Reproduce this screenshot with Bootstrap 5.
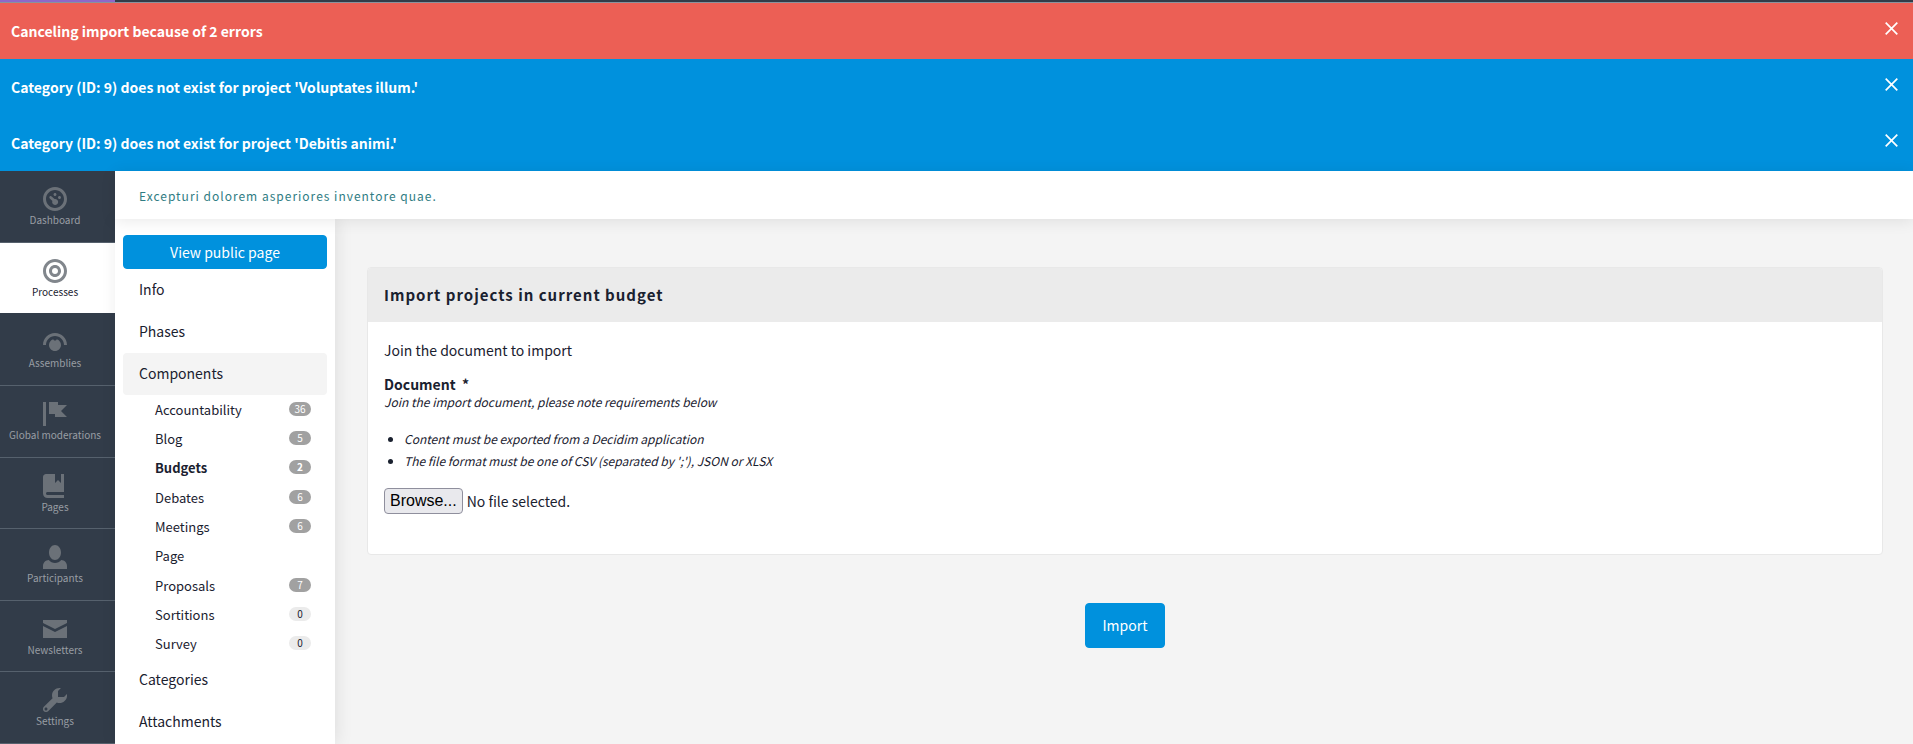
<!DOCTYPE html>
<html lang="en">
<head>
<meta charset="utf-8">
<meta name="viewport" content="width=device-width, initial-scale=1">
<title>Import projects</title>
<link href="https://cdn.jsdelivr.net/npm/bootstrap@5.3.0/dist/css/bootstrap.min.css" rel="stylesheet">
<style>
:root { --brand: #0091dd; --ink: #1a212f; --shell: #323c49; }
body { font-family: "Noto Sans CJK SC", sans-serif; font-size: 14px; line-height: 24px; color: var(--ink); background: #f4f4f4; }
a { text-decoration: none; }
.topstrip { height: 3px; background: #323c49; border-bottom: 1px solid #8a939d; }
.topstrip-logo { width: 115px; background: #8e68c9; }
.flash { height: 56px; padding: 0 10px 0 11px; color: #fff; font-size: 14px; font-weight: 700; }
.flash-error { background: #ec5f55; }
.flash-info { background: var(--brand); }
.flash-close { width: 23px; height: 22px; padding: 5px; margin-bottom: 7px; border: 0; background: none; color: #fff; }
.flash-close svg { display: block; width: 13px; height: 13px; }
.mainnav { width: 115px; background: var(--shell); }
.mainnav a { flex: 1 0 70px; padding: 16px 5px 0 0; border-bottom: 1px solid #56616d; color: #999ea4; font-size: 10px; line-height: 16px; text-align: center; }
.mainnav svg { width: 24px; height: 24px; fill: #6b7178; margin-bottom: 1px; }
.mainnav a.active { background: #fff; color: var(--ink); border-color: var(--shell); }
.mainnav a.active svg { fill: #81868c; }
.titlebar { height: 48px; padding: 2px 24px 0; background: #fff; box-shadow: 0 2px 16px rgba(0,0,0,.09); z-index: 1; }
.titlebar a { color: #2f7c83; font-size: 12px; letter-spacing: 1px; }
.subnav { width: 220px; padding: 16px 8px 0; background: #fff; box-shadow: 2px 0 16px rgba(0,0,0,.09); }
.btn-brand { --bs-btn-bg: #0091dd; --bs-btn-border-color: #0091dd; --bs-btn-color: #fff; --bs-btn-hover-bg: #0081c5; --bs-btn-hover-color: #fff; --bs-btn-border-radius: 4px; --bs-btn-font-size: 14px; }
.subnav .btn { height: 34px; padding: 4px; line-height: 24px; }
.section-link { display: block; padding: 8px 16px 10px; border-radius: 4px; color: var(--ink); }
.section-link.current { background: #f4f4f4; }
.sublist { height: 264px; }
.sublist a { padding: 0 16px 0 32px; font-size: 13px; line-height: 24px; color: var(--ink); }
.count { width: 22px; height: 14px; margin-bottom: 2px; border-radius: 7px; background: #a1a1a1; color: #fff; font-size: 10px; line-height: 14px; text-align: center; font-weight: 400; }
.count-empty { background: #ebebeb; color: var(--ink); }
.workspace { padding: 48px 30px 48px 32px; }
.panel { border: 1px solid #e8e8e8; border-radius: 4px; background: #fff; }
.panel-title { padding: 15px 16px; margin: 0; background: #ebebeb; font-size: 15px; line-height: 24px; font-weight: 700; letter-spacing: 1px; }
.panel-content { padding: 16px 16px 40px; }
.doc-label { margin-top: 12px; font-size: 14px; line-height: 20px; font-weight: 700; }
.help { font-size: 12px; line-height: 16px; font-style: italic; }
.help ul { padding-left: 20px; margin: 18px 0 16px; line-height: 22px; }
.file-button { height: 26px; padding: 0 5px; border: 1px solid #8f8f9d; border-radius: 4px; background: #e9e9ed; color: #000; font: 16px/24px "Liberation Sans", sans-serif; }
.submit { width: 80px; height: 45px; margin-top: 48px; }
</style>
</head>
<body class="d-flex flex-column min-vh-100">
<div class="topstrip d-flex"><div class="topstrip-logo"></div></div>

<div class="flash flash-error d-flex align-items-center justify-content-between" role="alert">
  <span>Canceling import because of 2 errors</span>
  <button class="flash-close" type="button" aria-label="Dismiss alert"><svg viewBox="0 0 13 13" stroke="currentColor" stroke-width="1.700"><path d="M.7.7l11.600 11.600M12.300.7L.7 12.300"/></svg></button>
</div>
<div class="flash flash-info d-flex align-items-center justify-content-between" role="alert">
  <span>Category (ID: 9) does not exist for project 'Voluptates illum.'</span>
  <button class="flash-close" type="button" aria-label="Dismiss alert"><svg viewBox="0 0 13 13" stroke="currentColor" stroke-width="1.700"><path d="M.7.7l11.600 11.600M12.300.7L.7 12.300"/></svg></button>
</div>
<div class="flash flash-info d-flex align-items-center justify-content-between" role="alert">
  <span>Category (ID: 9) does not exist for project 'Debitis animi.'</span>
  <button class="flash-close" type="button" aria-label="Dismiss alert"><svg viewBox="0 0 13 13" stroke="currentColor" stroke-width="1.700"><path d="M.7.7l11.600 11.600M12.300.7L.7 12.300"/></svg></button>
</div>

<div class="d-flex flex-grow-1">
  <nav class="mainnav d-flex flex-column flex-shrink-0" aria-label="Main">
    <a href="#" class="d-flex flex-column align-items-center"><svg viewBox="0 0 8 8"><path d="M4 0c-2.200 0-4 1.800-4 4s1.800 4 4 4 4-1.800 4-4-1.800-4-4-4zm0 1c1.660 0 3 1.340 3 3s-1.340 3-3 3-3-1.340-3-3 1.340-3 3-3zm0 1c-.28 0-.5.22-.5.5s.22.5.5.5.5-.22.5-.5-.22-.5-.5-.5zm-1.500 1c-.2 0-.4.2-.4.450 0 .15.050.25.150.350l.9.850c-.05.1-.1.22-.1.350 0 .55.450 1 1 1s1-.45 1-1-.450-1-1-1h-.2l-.95-.85a.5.5 0 0 0-.4-.15zm3 0c-.28 0-.5.22-.5.5s.22.5.5.5.5-.22.5-.5-.22-.5-.5-.5z"/></svg>Dashboard</a>
    <a href="#" class="active d-flex flex-column align-items-center" aria-current="page"><svg viewBox="0 0 8 8"><path d="M4 0c-2.200 0-4 1.800-4 4s1.800 4 4 4 4-1.800 4-4-1.800-4-4-4zm0 1c1.660 0 3 1.340 3 3s-1.340 3-3 3-3-1.340-3-3 1.340-3 3-3zm0 1c-1.110 0-2 .9-2 2s.9 2 2 2 2-.9 2-2-.9-2-2-2zm0 1c.56 0 1 .44 1 1s-.44 1-1 1-1-.44-1-1 .44-1 1-1z"/></svg>Processes</a>
    <a href="#" class="d-flex flex-column align-items-center"><svg viewBox="0 0 8 8"><path d="M4 1c-2.200 0-4 1.800-4 4h1c0-1.660 1.340-3 3-3s3 1.340 3 3h1c0-2.200-1.800-4-4-4zm-.59 2.090c-.81.25-1.410 1.010-1.410 1.910 0 1.110.9 2 2 2 1.110 0 2-.89 2-2 0-.9-.59-1.650-1.410-1.910-.1.250-.320.430-.59.430s-.5-.18-.59-.430z"/></svg>Assemblies</a>
    <a href="#" class="d-flex flex-column align-items-center"><svg viewBox="0 0 8 8"><path d="M0 0v8h1v-8h-1zm2 0v4h2v1h4l-2-1.970 2-2.030h-3v-1h-3z"/></svg>Global moderations</a>
    <a href="#" class="d-flex flex-column align-items-center"><svg viewBox="0 0 8 8"><path d="M1 0c-.55 0-1 .45-1 1v5.500c0 .83.67 1.500 1.500 1.500h5.500v-1h-5.500c-.28 0-.5-.22-.5-.5s.22-.5.5-.5h5.500v-6h-1v3l-1-1-1 1v-3h-3z"/></svg>Pages</a>
    <a href="#" class="d-flex flex-column align-items-center"><svg viewBox="0 0 8 8"><path d="M4 0c-1.100 0-2 1.120-2 2.500s.9 2.500 2 2.500 2-1.120 2-2.500-.9-2.500-2-2.500zm-2.090 5c-1.060.05-1.910.92-1.910 2v1h8v-1c0-1.080-.84-1.950-1.910-2-.54.61-1.280 1-2.090 1-.81 0-1.550-.39-2.090-1z"/></svg>Participants</a>
    <a href="#" class="d-flex flex-column align-items-center"><svg viewBox="0 0 8 8"><path d="M0 1v1l4 2 4-2v-1h-8zm0 2v4h8v-4l-4 2-4-2z"/></svg>Newsletters</a>
    <a href="#" class="d-flex flex-column align-items-center"><svg viewBox="0 0 8 8"><path d="M5.500 0c-1.380 0-2.500 1.120-2.500 2.500 0 .32.080.62.190.91l-2.910 2.880c-.39.39-.39 1.050 0 1.440.2.2.46.28.72.28.26 0 .52-.09.72-.28l2.880-2.910c.28.11.58.19.91.19 1.380 0 2.500-1.120 2.500-2.500 0-.16 0-.32-.03-.47l-.97.97h-2v-2l.97-.97c-.15-.03-.31-.03-.47-.03zm-4.500 6.500c.28 0 .5.22.5.5s-.22.5-.5.5-.5-.22-.5-.5.22-.5.5-.5z"/></svg>Settings</a>
  </nav>

  <div class="d-flex flex-column flex-grow-1">
    <header class="titlebar d-flex align-items-center"><a href="#">Excepturi dolorem asperiores inventore quae.</a></header>
    <div class="d-flex flex-grow-1">
      <nav class="subnav flex-shrink-0" aria-label="Process">
        <a class="btn btn-brand d-block" href="#">View public page</a>
        <a class="section-link" href="#">Info</a>
        <a class="section-link" href="#">Phases</a>
        <a class="section-link current" href="#">Components</a>
        <div class="sublist d-flex flex-column">
          <a href="#" class="d-flex flex-fill align-items-center justify-content-between">Accountability <span class="count">36</span></a>
          <a href="#" class="d-flex flex-fill align-items-center justify-content-between">Blog <span class="count">5</span></a>
          <a href="#" class="d-flex flex-fill align-items-center justify-content-between fw-bold">Budgets <span class="count fw-bold">2</span></a>
          <a href="#" class="d-flex flex-fill align-items-center justify-content-between">Debates <span class="count">6</span></a>
          <a href="#" class="d-flex flex-fill align-items-center justify-content-between">Meetings <span class="count">6</span></a>
          <a href="#" class="d-flex flex-fill align-items-center justify-content-between">Page</a>
          <a href="#" class="d-flex flex-fill align-items-center justify-content-between">Proposals <span class="count">7</span></a>
          <a href="#" class="d-flex flex-fill align-items-center justify-content-between">Sortitions <span class="count count-empty">0</span></a>
          <a href="#" class="d-flex flex-fill align-items-center justify-content-between">Survey <span class="count count-empty">0</span></a>
        </div>
        <a class="section-link" href="#">Categories</a>
        <a class="section-link" href="#">Attachments</a>
      </nav>

      <main class="workspace flex-grow-1">
        <form onsubmit="return false">
          <section class="panel overflow-hidden">
            <h2 class="panel-title">Import projects in current budget</h2>
            <div class="panel-content">
              <p class="mb-0">Join the document to import</p>
              <label class="doc-label d-block" for="import-file">Document&nbsp; *</label>
              <div class="help" id="import-help">
                Join the import document, please note requirements below
                <ul>
                  <li>Content must be exported from a Decidim application</li>
                  <li>The file format must be one of CSV (separated by ';'), JSON or XLSX</li>
                </ul>
              </div>
              <div class="d-flex align-items-center gap-1">
                <button class="file-button" type="button" onclick="document.getElementById('import-file').click()">Browse...</button>
                <span>No file selected.</span>
                <input id="import-file" type="file" hidden aria-describedby="import-help">
              </div>
            </div>
          </section>
          <div class="text-center"><button class="btn btn-brand submit" type="submit">Import</button></div>
        </form>
      </main>
    </div>
  </div>
</div>
<script src="https://cdn.jsdelivr.net/npm/bootstrap@5.3.0/dist/js/bootstrap.bundle.min.js"></script>
</body>
</html>
